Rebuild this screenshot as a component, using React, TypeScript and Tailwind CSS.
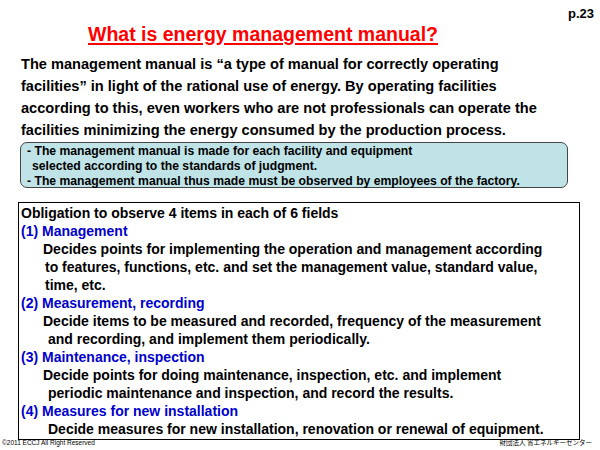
import React from "react"

const items = [
    {
        head: "(1) Management",
        lines: [
            "Decides points for implementing the operation and management according",
            "to features, functions, etc. and set the management value, standard value,",
            "time, etc.",
        ],
        pad: "pl-[22px]",
        pad2: "pl-[24px]",
    },
    {
        head: "(2) Measurement, recording",
        lines: [
            "Decide items to be measured and recorded, frequency of the measurement",
            "and recording, and implement them periodically.",
        ],
        pad: "pl-[22px]",
        pad2: "pl-[27px]",
    },
    {
        head: "(3) Maintenance, inspection",
        lines: [
            "Decide points for doing maintenance, inspection, etc. and implement",
            "periodic maintenance and inspection, and record the results.",
        ],
        pad: "pl-[22px]",
        pad2: "pl-[27px]",
    },
    {
        head: "(4) Measures for new installation",
        lines: ["Decide measures for new installation, renovation or renewal of equipment."],
        pad: "pl-[27px]",
        pad2: "pl-[27px]",
    },
]

export default function App() {
    return (
        <div className="w-[600px] h-[450px] bg-white relative overflow-hidden font-[Liberation_Sans,Arial,sans-serif] text-black">
            <div className="absolute right-[6px] top-[4px] text-[13px] font-bold">p.23</div>
            <div className="pt-[21px] pl-[88px] text-[19.5px] leading-[26px] font-bold text-[#ff0000] underline decoration-[1.5px] underline-offset-[2px]">
                What is energy management manual?
            </div>
            <div className="pl-[21px] pt-[6px] text-[14.6px] font-bold leading-[22px]">
                <div>The management manual is “a type of manual for correctly operating</div>
                <div>facilities” in light of the rational use of energy. By operating facilities</div>
                <div>according to this, even workers who are not professionals can operate the</div>
                <div>facilities minimizing the energy consumed by the production process.</div>
            </div>
            <div className="ml-[20px] mt-[1px] w-[548px] h-[46px] rounded-[7px] border border-[#444] bg-[#bfe3e7] pl-[6px] pt-[1px] text-[12.2px] font-bold leading-[15px] whitespace-nowrap">
                <div>- The management manual is made for each facility and equipment</div>
                <div className="pl-[5px]">selected according to the standards of judgment.</div>
                <div>- The management manual thus made must be observed by employees of the factory.</div>
            </div>
            <div className="ml-[18px] mt-[14px] w-[562px] h-[238px] border border-black pl-[2px] pt-[1px] text-[14px] font-bold leading-[18px] whitespace-nowrap">
                <div>Obligation to observe 4 items in each of 6 fields</div>
                {items.map(it => (
                    <div key={it.head}>
                        <div className="text-[#0000cc]">{it.head}</div>
                        {it.lines.map((l, i) => (
                            <div key={i} className={i === 0 ? it.pad : it.pad2}>{l}</div>
                        ))}
                    </div>
                ))}
            </div>
            <div className="absolute left-[2px] bottom-[2px] text-[6.5px]">©2011 ECCJ All Right Reserved</div>
            <div className="absolute right-[8px] bottom-[2px] text-[6.5px] font-[Noto_Sans_CJK_JP,sans-serif]">財団法人 省エネルギーセンター</div>
        </div>
    )
}
